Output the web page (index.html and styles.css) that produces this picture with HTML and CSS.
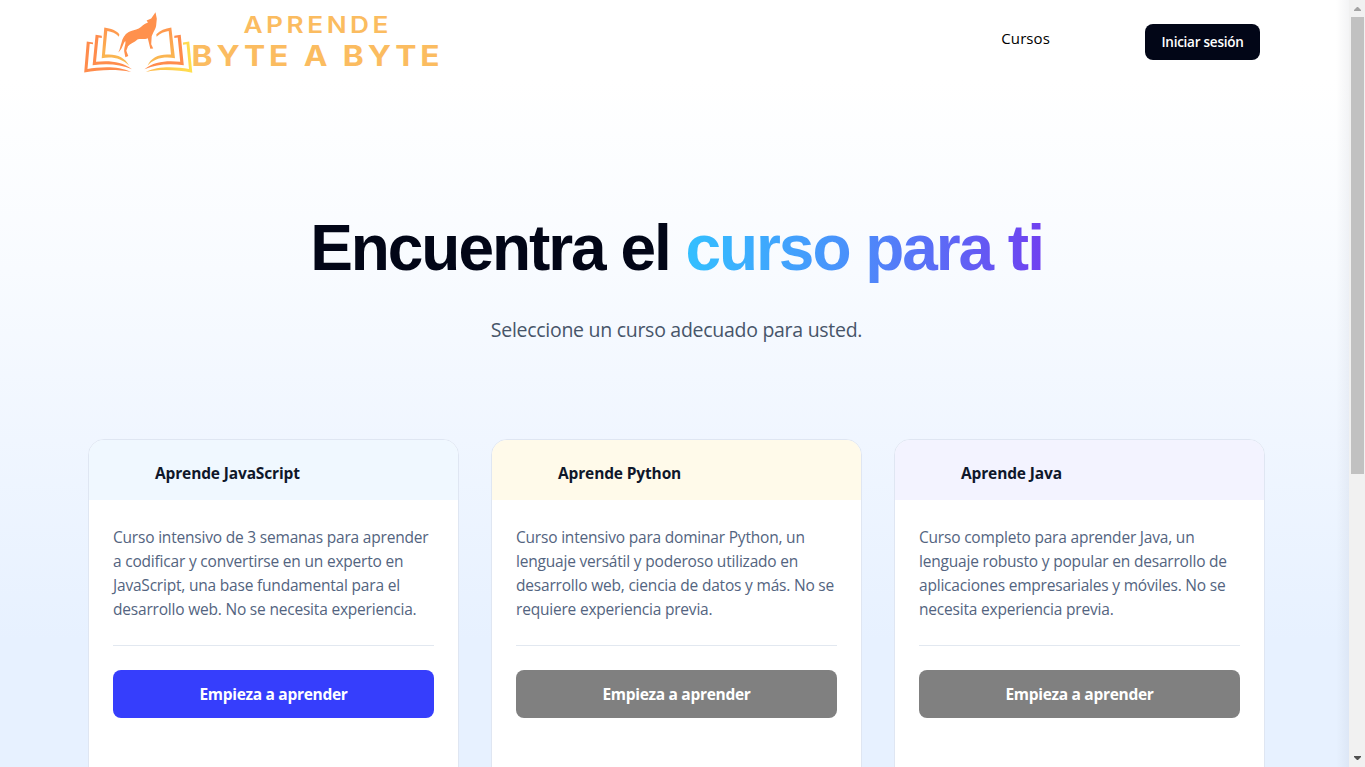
FILE: index.html
```html
<!DOCTYPE html>
<html lang="es">
<head>
<meta charset="utf-8">
<title>Aprende Byte a Byte</title>
<link rel="stylesheet" href="styles.css">
</head>
<body>
<div class="window">
  <div class="page">
    <header class="topbar">
      <svg class="logo" width="374" height="76" viewBox="76 4 374 76" role="img" aria-label="Aprende Byte a Byte">
        <defs>
          <linearGradient id="gold" x1="0" y1="0" x2="0" y2="1"><stop offset="0" stop-color="#ff964e"/><stop offset="1" stop-color="#f9bf52"/></linearGradient>
          <linearGradient id="sun" x1="0" y1="0" x2="1" y2="0"><stop offset="0" stop-color="#ffb84d"/><stop offset="1" stop-color="#ffe04f"/></linearGradient>
        </defs>
        <path fill="#ff8c4c" d="M86.8 41.5 93 42.4V44.3L89.7 43.8 87.5 69.1C99 67 118 65.5 131 71.9C117 69 99 69.5 84.2 72.5Z"/>
        <path fill="#ff8c4c" d="M95.6 34.7 101.8 35.8V38L98.5 37.5 96 61.8C107 60.4 122 60.8 132 69.3C120 64 107 63.2 92.6 65.2Z"/>
        <path fill="url(#gold)" d="M104.3 27.5C111 28.6 116.5 30.3 119.3 34.2L119 36.7C116 33.5 111.5 31.8 107.3 31.1L105 54.6C116 53.5 125 57 129.2 65.8C122 58.3 112 56.2 101.7 58.2Z"/>
        <path fill="url(#gold)" d="M171.3 27.5C165 28.6 160 30.3 156.3 34.2L156.6 36.7C160 33.5 164.5 31.8 168.7 31.1L171 54.6C160 53.5 151 57 147.5 65.8C154 58.3 164 56.2 175 58.2Z"/>
        <path fill="#ff8c4c" d="M180.7 34.7 174.3 35.8V38L177.7 37.5 180.2 61.8C169 60.4 154 60.8 144.5 69.3C157 64 169 63.2 183.8 65.2Z"/>
        <path fill="url(#sun)" d="M189.2 41.5 183 42.6V44.8L186.6 44.2 189 69.1C177 67 158 65.5 146 71.9C159 69 177 69.5 192.3 72.7Z"/>
        <path fill="#ff914d" d="M155.5 12.2 156.8 18.7 156.2 25C156 28.5 153.7 31 151.7 36.3L151.2 44.3 153.2 48.4 150.3 48.7 149.3 44.5 147.8 38.3C144 39.8 141 38.6 137.4 39.4C134.5 42.5 130 43.5 128 46.3L126.3 50.7 128.3 56 125.4 57.2 124.2 51.5C124 47 126 44.3 125.3 41C123 43.5 122.5 49 118.3 52.4C120.4 48.5 120.2 45.5 121.5 42.7C122.4 38.5 124.5 34.6 128.7 32.1C132 30.3 135.3 30.2 138.7 28.5C142 26.5 143.6 24 148 22.5L146.6 20.5 151.2 18.6Z"/>
        <text class="logo-text small" x="243.5" y="33" textLength="148.5" lengthAdjust="spacingAndGlyphs">APRENDE</text>
        <text class="logo-text big" x="191.5" y="66" textLength="252" lengthAdjust="spacingAndGlyphs">BYTE A BYTE</text>
      </svg>
      <nav class="nav">
        <a class="nav-link">Cursos</a>
        <a class="login">Iniciar sesión</a>
      </nav>
    </header>
    <main>
      <section class="hero">
        <h1 class="title">Encuentra el <span class="accent">curso para ti</span></h1>
        <p class="lead">Seleccione un curso adecuado para usted.</p>
      </section>
      <section class="cards">
        <article class="card">
          <h2 class="card-head blue">Aprende JavaScript</h2>
          <div class="card-body">
            <p class="desc">Curso intensivo de 3 semanas para aprender<br>a codificar y convertirse en un experto en<br>JavaScript, una base fundamental para el<br>desarrollo web. No se necesita experiencia.</p>
            <a class="start active">Empieza a aprender</a>
          </div>
        </article>
        <article class="card">
          <h2 class="card-head yellow">Aprende Python</h2>
          <div class="card-body">
            <p class="desc">Curso intensivo para dominar Python, un<br>lenguaje versátil y poderoso utilizado en<br>desarrollo web, ciencia de datos y más. No se<br>requiere experiencia previa.</p>
            <a class="start">Empieza a aprender</a>
          </div>
        </article>
        <article class="card">
          <h2 class="card-head violet">Aprende Java</h2>
          <div class="card-body">
            <p class="desc">Curso completo para aprender Java, un<br>lenguaje robusto y popular en desarrollo de<br>aplicaciones empresariales y móviles. No se<br>necesita experiencia previa.</p>
            <a class="start">Empieza a aprender</a>
          </div>
        </article>
      </section>
    </main>
  </div>
  <div class="scrollbar">
    <svg class="arrow" width="16" height="17" viewBox="0 0 16 17"><path fill="#a3a3a3" d="M5 11V10L8 7H9L12 10V11Z"/></svg>
    <div class="thumb"></div>
    <svg class="arrow" width="16" height="17" viewBox="0 0 16 17"><path fill="#505050" d="M5 6V7L8 10H9L12 7V6Z"/></svg>
  </div>
</div>
</body>
</html>
```
FILE: styles.css
```css
* { box-sizing: border-box; }
body { margin: 0; overflow: hidden; font-family: "Open Sans", "Noto Sans", sans-serif; color: #020617; }
.window { display: flex; width: 1365px; height: 767px; overflow: hidden; }
.page { position: relative; width: 1349px; height: 767px; overflow: hidden; background: linear-gradient(180deg, #fff 0, #fff 80px, #f8fbff 270px, #f0f6ff 440px, #e7f1ff 640px, #e7f1ff 100%); }
.page::after { content: ""; position: absolute; top: 0; right: 0; width: 13px; height: 100%; background: linear-gradient(90deg, transparent, rgba(30, 40, 70, .05)); }
.topbar { display: flex; justify-content: space-between; height: 84px; padding: 4px 89px 0 76px; }
.logo { display: block; flex: none; }
.logo-text { font-family: Inter, sans-serif; font-weight: 600; fill: #fbbc60; }
.small { font-size: 22.5px; letter-spacing: 3px; }
.big { font-size: 28.5px; font-weight: 700; letter-spacing: 3.5px; }
.nav { display: flex; align-items: flex-start; gap: 95px; padding-top: 20px; }
.nav-link { font-size: 15px; line-height: 29px; letter-spacing: .1px; color: #000; }
.login { width: 115px; height: 36px; border-radius: 8px; background: #020617; color: #fff; font-size: 13.5px; font-weight: 600; line-height: 36px; text-align: center; letter-spacing: -.25px; white-space: nowrap; }
.hero { width: 1353px; padding-top: 132px; text-align: center; }
.title { margin: 0; font-family: "Liberation Sans", sans-serif; font-size: 64px; line-height: 64px; font-weight: 700; letter-spacing: -2.05px; white-space: nowrap; }
.accent { background: linear-gradient(90deg, #33c0ff, #4a91fb 45%, #7040f0); -webkit-background-clip: text; background-clip: text; color: transparent; padding-bottom: 8px; }
.lead { margin: 36px 0 0; font-size: 19.5px; line-height: 28px; letter-spacing: -.28px; color: #475569; }
.cards { display: grid; grid-template-columns: repeat(3, 1fr); gap: 32px; width: 1177px; margin: 95px 0 0 88px; }
.card { height: 480px; border: 1px solid #dfe6f2; border-radius: 16px; background: #fff; overflow: hidden; }
.card-head { height: 60px; margin: 0; padding: 0 0 0 66px; font-size: 15.5px; line-height: 66px; font-weight: 700; letter-spacing: -.14px; color: #0f172a; }
.blue { background: #f0f8ff; }
.yellow { background: #fffaea; }
.violet { background: #f3f3ff; }
.card-body { padding: 25px 24px; }
.desc { margin: 0; height: 121px; border-bottom: 1px solid #e2e8f0; font-size: 15.5px; line-height: 24px; letter-spacing: -.2px; color: #536480; white-space: nowrap; }
.start { display: block; height: 48px; margin-top: 24px; border-radius: 8px; background: gray; color: #fff; font-size: 15.5px; font-weight: 700; line-height: 49px; letter-spacing: -.3px; text-align: center; }
.start.active { background: #363efc; }
.scrollbar { display: flex; flex-direction: column; width: 16px; height: 767px; background: #f1f1f1; }
.arrow { display: block; flex: none; }
.thumb { width: 13px; height: 457px; margin: 0 1px 276px 2px; background: #c1c1c1; }
```
